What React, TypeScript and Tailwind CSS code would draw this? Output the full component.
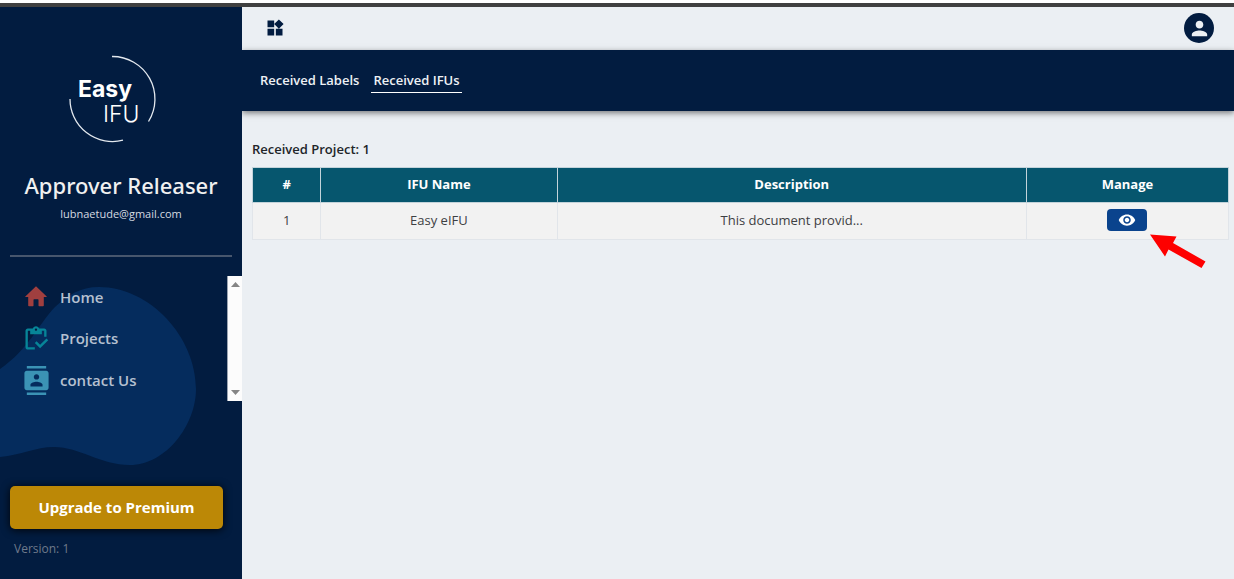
import React from "react";
import {
  MdContacts,
  MdOutlineInventory,
  MdPerson,
  MdVisibility,
  MdWidgets,
} from "react-icons/md";

function Logo() {
  return (
    <svg
      width="88"
      height="88"
      viewBox="0 0 88 88"
      role="img"
      aria-label="Easy IFU"
      className="mr-4 shrink-0"
    >
      <path
        d="M43 1.5A42.5 42.5 0 0 1 79.500 66.500"
        fill="none"
        stroke="#e3e8ee"
        strokeWidth="1.300"
      />
      <path
        d="M1 44A42.500 42.500 0 0 0 54 85.200"
        fill="none"
        stroke="#e3e8ee"
        strokeWidth="1.300"
      />
      <text x="9" y="42" fill="#fff" fontSize="23" fontWeight="700" fontFamily="Inter, sans-serif">
        Easy
      </text>
      <text x="34" y="67" fill="#fff" fontSize="23" fontWeight="300" fontFamily="Inter, sans-serif">
        IFU
      </text>
    </svg>
  );
}

function HomeIcon() {
  return (
    <svg width="24" height="24" viewBox="0 0 24 24" fill="currentColor" aria-hidden="true">
      <path d="M12 1.200 1.300 11.400q-.3.700.4.700h2.500v8.300q0 .8.800.8h3.900q.6 0 .6-.7v-5.700q0-.6.600-.6h3.800q.6 0 .6.600v5.700q0 .7.600.7H19q.8 0 .8-.8v-8.300h2.500q.7 0 .4-.7Z" />
    </svg>
  );
}

function Blob() {
  return (
    <svg
      className="absolute left-0 top-[280px]"
      width="200"
      height="180"
      viewBox="0 0 200 180"
      aria-hidden="true"
    >
      <path
        d="M0 82C29 62 37 39 55 20C68 8 80 0 99 0C150 0 196 50 196 102C196 138 166 178 130 178C100 178 80 160 54 160C35 160 22 168 0 170Z"
        fill="#052c5d"
      />
    </svg>
  );
}

const links = [
  { label: "Home", icon: <HomeIcon />, color: "text-[#a03f3f]" },
  { label: "Projects", icon: <MdOutlineInventory size={28} />, color: "text-[#078598]" },
  { label: "contact Us", icon: <MdContacts size={29} />, color: "text-[#3b93b5]" },
];

function Sidebar() {
  return (
    <aside className="relative flex w-[242px] shrink-0 flex-col bg-[#021c40]">
      <Blob />
      <div className="relative flex flex-col items-center pt-12">
        <Logo />
        <h1 className="mt-[26px] font-['Noto_Sans','Open_Sans',sans-serif] text-[22px] leading-8 font-medium text-[#f0f0f0]">
          Approver Releaser
        </h1>
        <p className="mt-[5px] text-[11px] leading-4 text-[#d5dae1]">lubnaetude@gmail.com</p>
      </div>
      <hr className="relative mx-2.5 mt-[33px] border-t-2 border-[#47566d]" />
      <div className="relative mt-[19px] flex h-[125px] justify-between">
        <nav className="flex flex-col">
          {links.map((link) => (
            <a key={link.label} href="#" className="flex h-[42px] items-center pl-[21px]">
              <span className={`flex w-[30px] justify-center ${link.color}`}>{link.icon}</span>
              <span className="ml-[9px] text-[15px] font-semibold text-[#b5c0d0]">{link.label}</span>
            </a>
          ))}
        </nav>
        <div className="flex w-[15px] flex-col items-center justify-between border-l border-[#9aa3b0] bg-[#fcfcfc] py-[6px]">
          <svg width="9" height="5" viewBox="0 0 9 5" fill="#858585" aria-hidden="true">
            <path d="M4.500 0 9 5H0Z" />
          </svg>
          <svg width="9" height="5" viewBox="0 0 9 5" fill="#858585" aria-hidden="true">
            <path d="M0 0h9L4.500 5Z" />
          </svg>
        </div>
      </div>
      <div className="relative mt-auto pr-[19px] pb-5 pl-2.5">
        <button
          type="button"
          className="h-[43px] w-full rounded-[5px] bg-[#bc8806] text-[15px] font-bold text-white shadow-[0_1px_8px_rgba(0,0,0,0.9)]"
        >
          Upgrade to Premium
        </button>
        <p className="mt-2.5 pl-1 text-[12px] leading-5 text-[#6f7a8b]">Version: 1</p>
      </div>
    </aside>
  );
}

const headCell = "h-[35px] border border-[#c3d3da] p-0 font-bold";
const bodyCell = "h-[37px] border border-[#e1e5ea] p-0";

export default function App() {
  return (
    <div className="flex min-h-screen flex-col bg-white pt-[3px] font-['Open_Sans','Noto_Sans',sans-serif]">
      <div className="flex flex-1 border-t-4 border-[#404040]">
        <Sidebar />
        <main className="flex min-w-0 flex-1 flex-col bg-[#ebeff3]">
          <header className="flex h-[43px] items-center justify-between pr-5 pb-px pl-[23px] text-[#021c40]">
            <button type="button" aria-label="Toggle menu">
              <MdWidgets size={20} />
            </button>
            <button
              type="button"
              aria-label="Account"
              className="flex size-[30px] items-center justify-center rounded-full bg-[#021c40] text-[#ebeff3]"
            >
              <MdPerson size={23} />
            </button>
          </header>
          <nav className="flex h-[61px] items-center gap-3 bg-[#021c40] px-[18px] text-[13px] font-semibold text-[#eef1f5] shadow-[0_2px_6px_rgba(0,0,0,0.5)]">
            <a href="#" className="border-b border-transparent py-[3px] leading-[18px]">
              Received Labels
            </a>
            <a href="#" className="border-b border-white px-[2px] py-[3px] leading-[18px]">
              Received IFUs
            </a>
          </nav>
          <section className="pt-7 pr-[5px] pl-2.5">
            <h2 className="text-[13px] leading-5 font-semibold text-[#212529]">Received Project: 1</h2>
            <table className="mt-2 w-full table-fixed border-collapse text-center text-[13px]">
              <colgroup>
                <col className="w-[7%]" />
                <col className="w-[24.2%]" />
                <col className="w-[48.1%]" />
                <col className="w-[20.700%]" />
              </colgroup>
              <thead className="bg-[#06566e] text-white">
                <tr>
                  <th className={headCell}>#</th>
                  <th className={headCell}>IFU Name</th>
                  <th className={headCell}>Description</th>
                  <th className={headCell}>Manage</th>
                </tr>
              </thead>
              <tbody className="bg-[#f2f2f2] text-[#3d4043]">
                <tr>
                  <td className={bodyCell}>1</td>
                  <td className={bodyCell}>Easy eIFU</td>
                  <td className={bodyCell}>This document provid...</td>
                  <td className={bodyCell}>
                    <div className="relative mx-auto w-10 pb-0.5">
                      <button
                        type="button"
                        aria-label="View"
                        className="flex h-[22px] w-10 items-center justify-center rounded-[4px] bg-[#0a438d] text-white"
                      >
                        <MdVisibility size={18} />
                      </button>
                      <svg
                        className="absolute top-[25px] left-[43px]"
                        width="56"
                        height="36"
                        viewBox="0 0 56 36"
                        fill="#fe0000"
                        aria-hidden="true"
                      >
                        <path d="M0 .5 26.500 2.500 23 9 55.500 27.500 51.500 34 18.500 15.500 15 22.500Z" />
                      </svg>
                    </div>
                  </td>
                </tr>
              </tbody>
            </table>
          </section>
        </main>
      </div>
    </div>
  );
}
